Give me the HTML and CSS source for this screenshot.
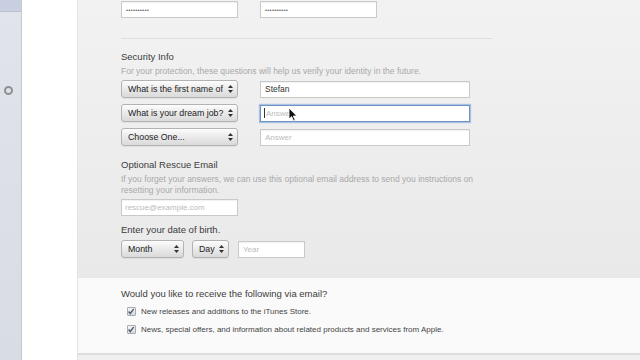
FILE: index.html
```html
<!DOCTYPE html>
<html lang="en">
<head>
    <meta charset="UTF-8">
    <title>Create iTunes Store Account</title>
    <link rel="stylesheet" href="styles.css">
</head>
<body>
<div class="window">
    <!-- Sidebar of the app -->
    <aside class="sidebar">
        <div class="sidebar-top"></div>
        <div class="sidebar-ring"></div>
    </aside>
    <div class="gutter"></div>

    <!-- Account form -->
    <main class="panel">
        <section class="gray-part">
            <div class="row pw-row">
                <div class="field short"><span class="dots">••••••••••</span></div>
                <div class="field short"><span class="dots">••••••••••</span></div>
            </div>
            <div class="divider"></div>

            <h2 class="label sec-title">Security Info</h2>
            <p class="hint one-line">For your protection, these questions will help us verify your identity in the future.</p>
            <div class="qa-list">
                <div class="row">
                    <div class="select wide"><span>What is the first name of</span><svg class="arrows" width="5" height="8" viewBox="0 0 5 8"><path d="M2.5 0L5 3H0z M2.5 8L5 5H0z" fill="#333"/></svg></div>
                    <div class="field long"><span class="val">Stefan</span></div>
                </div>
                <div class="row">
                    <div class="select wide"><span>What is your dream job?</span><svg class="arrows" width="5" height="8" viewBox="0 0 5 8"><path d="M2.5 0L5 3H0z M2.5 8L5 5H0z" fill="#333"/></svg></div>
                    <div class="field long focused"><span class="caret"></span><span class="ph">Answer</span></div>
                </div>
                <div class="row">
                    <div class="select wide"><span>Choose One...</span><svg class="arrows" width="5" height="8" viewBox="0 0 5 8"><path d="M2.5 0L5 3H0z M2.5 8L5 5H0z" fill="#333"/></svg></div>
                    <div class="field long"><span class="ph">Answer</span></div>
                </div>
            </div>

            <h2 class="label rescue-title">Optional Rescue Email</h2>
            <p class="hint desc">If you forget your answers, we can use this optional email address to send you instructions on resetting your information.</p>
            <div class="field short email"><span class="ph">rescue@example.com</span></div>

            <h2 class="label dob-title">Enter your date of birth.</h2>
            <div class="row dob-row">
                <div class="select month"><span>Month</span><svg class="arrows" width="5" height="8" viewBox="0 0 5 8"><path d="M2.5 0L5 3H0z M2.5 8L5 5H0z" fill="#333"/></svg></div>
                <div class="select day"><span>Day</span><svg class="arrows" width="5" height="8" viewBox="0 0 5 8"><path d="M2.5 0L5 3H0z M2.5 8L5 5H0z" fill="#333"/></svg></div>
                <div class="field year"><span class="ph">Year</span></div>
            </div>
        </section>

        <section class="white-part">
            <h2 class="label mail-title">Would you like to receive the following via email?</h2>
            <div class="check-row">
                <span class="box"><svg width="9" height="9" viewBox="0 0 9 9"><path d="M1.8 4.6L3.7 6.8L7.6 1.6" fill="none" stroke="#55606e" stroke-width="1.6"/></svg></span>
                <span>New releases and additions to the iTunes Store.</span>
            </div>
            <div class="check-row">
                <span class="box"><svg width="9" height="9" viewBox="0 0 9 9"><path d="M1.8 4.6L3.7 6.8L7.6 1.6" fill="none" stroke="#55606e" stroke-width="1.6"/></svg></span>
                <span>News, special offers, and information about related products and services from Apple.</span>
            </div>
        </section>
        <div class="below"></div>

        <!-- mouse pointer over the focused field -->
        <svg class="pointer" width="10" height="15" viewBox="0 0 10 15">
            <path d="M1 1L1 12L3.6 9.6L5.6 14L7.2 13.3L5.3 9L8.8 9Z" fill="#111" stroke="#fff" stroke-width="0.8"/>
        </svg>
    </main>
</div>
</body>
</html>
```

FILE: styles.css
```css
* { box-sizing: border-box; }
body {
  margin: 0;
  font-family: 'Liberation Sans', Arial, sans-serif;
  background: #f0f0f0;
}
.window {
  display: flex;
  width: 640px;
  height: 360px;
  overflow: hidden;
}
/* left sidebar */
.sidebar {
  width: 22px;
  background: linear-gradient(#e1e4ea, #d8dce3);
  border-right: 1px solid #c6c9cf;
  position: relative;
}
.sidebar-top {
  height: 12px;
  background: #c7cfe0;
  border-bottom: 1px solid #b9c1d3;
}
.sidebar-ring {
  width: 9px;
  height: 9px;
  border: 2px solid #8e9096;
  border-radius: 50%;
  margin: 74px 0 0 4px;
}
.gutter {
  width: 56px;
  background: #fff;
  border-right: 1px solid #e3e3e3;
}
/* main panel */
.panel {
  flex: 1;
  position: relative;
  display: flex;
  flex-direction: column;
}
.gray-part {
  background: linear-gradient(#f2f2f2, #e9e9e9);
  padding: 1px 0 20px 43px;
}
.row {
  display: flex;
  align-items: center;
  gap: 22px;
}
.field {
  height: 17px;
  background: #fff;
  border: 1px solid #c9c9c9;
  box-shadow: inset 0 1px 1px rgba(0,0,0,0.06);
  display: flex;
  align-items: center;
  padding-left: 4px;
  font-size: 8px;
  color: #333;
}
.field.short { width: 117px; }
.field.long { width: 210px; }
.dots { font-size: 6px; letter-spacing: 0.2px; color: #666; }
.val { font-size: 8.5px; color: #333; }
.ph { color: #bbb; }
.focused {
  border: 1px solid #6f93c4;
  box-shadow: 0 0 1px 1px #a9c2e4;
  padding-left: 3px;
}
.caret {
  width: 1px;
  height: 10px;
  background: #333;
  margin-right: 1px;
}
.divider {
  width: 371px;
  height: 1px;
  background: #dedede;
  margin-top: 20px;
}
.label {
  margin: 0;
  font-size: 9.5px;
  font-weight: normal;
  line-height: 14px;
  color: #3c3c3c;
}
.sec-title { margin-top: 11px; }
.hint {
  margin: 0;
  font-size: 8.5px;
  color: #a9a9a9;
}
.one-line { line-height: 12px; margin-top: 1px; }
.qa-list {
  margin-top: 3px;
  display: flex;
  flex-direction: column;
  gap: 6px;
}
/* popup buttons */
.select {
  height: 18px;
  border: 1px solid #b3b3b3;
  border-radius: 3px;
  background: linear-gradient(#fdfdfd, #e8e8e8 55%, #dadada);
  box-shadow: 0 1px 0 rgba(0,0,0,0.05);
  display: flex;
  align-items: center;
  justify-content: space-between;
  padding: 0 4px 0 6px;
  font-size: 8.8px;
  color: #222;
}
.select.wide { width: 117px; }
.arrows { flex: none; }
.rescue-title { margin-top: 12px; }
.desc {
  width: 370px;
  line-height: 11px;
  margin-top: 2px;
}
.email { margin-top: 3px; padding-left: 3px; }
.dob-title { margin-top: 7px; }
.dob-row { margin-top: 3px; gap: 0; }
.select.month { width: 63px; }
.select.day { width: 37px; margin-left: 8px; }
.field.year { width: 67px; margin-left: 9px; }
/* email options */
.white-part {
  background: #fafafa;
  padding: 9px 0 15px 43px;
  border-bottom: 2px solid #dcdcdc;
}
.mail-title { margin-bottom: 1px; }
.check-row {
  height: 18px;
  display: flex;
  align-items: center;
  gap: 5px;
  padding-left: 6px;
  font-size: 8px;
  color: #454545;
}
.box {
  width: 9px;
  height: 9px;
  border: 1px solid #a8abb0;
  border-radius: 1px;
  background: linear-gradient(#f4f5f7, #d6d9de);
  display: flex;
}
.box svg { margin: -1px 0 0 -1px; }
.below {
  flex: 1;
  background: #efefef;
}
.pointer {
  position: absolute;
  left: 210px;
  top: 107px;
}
```
